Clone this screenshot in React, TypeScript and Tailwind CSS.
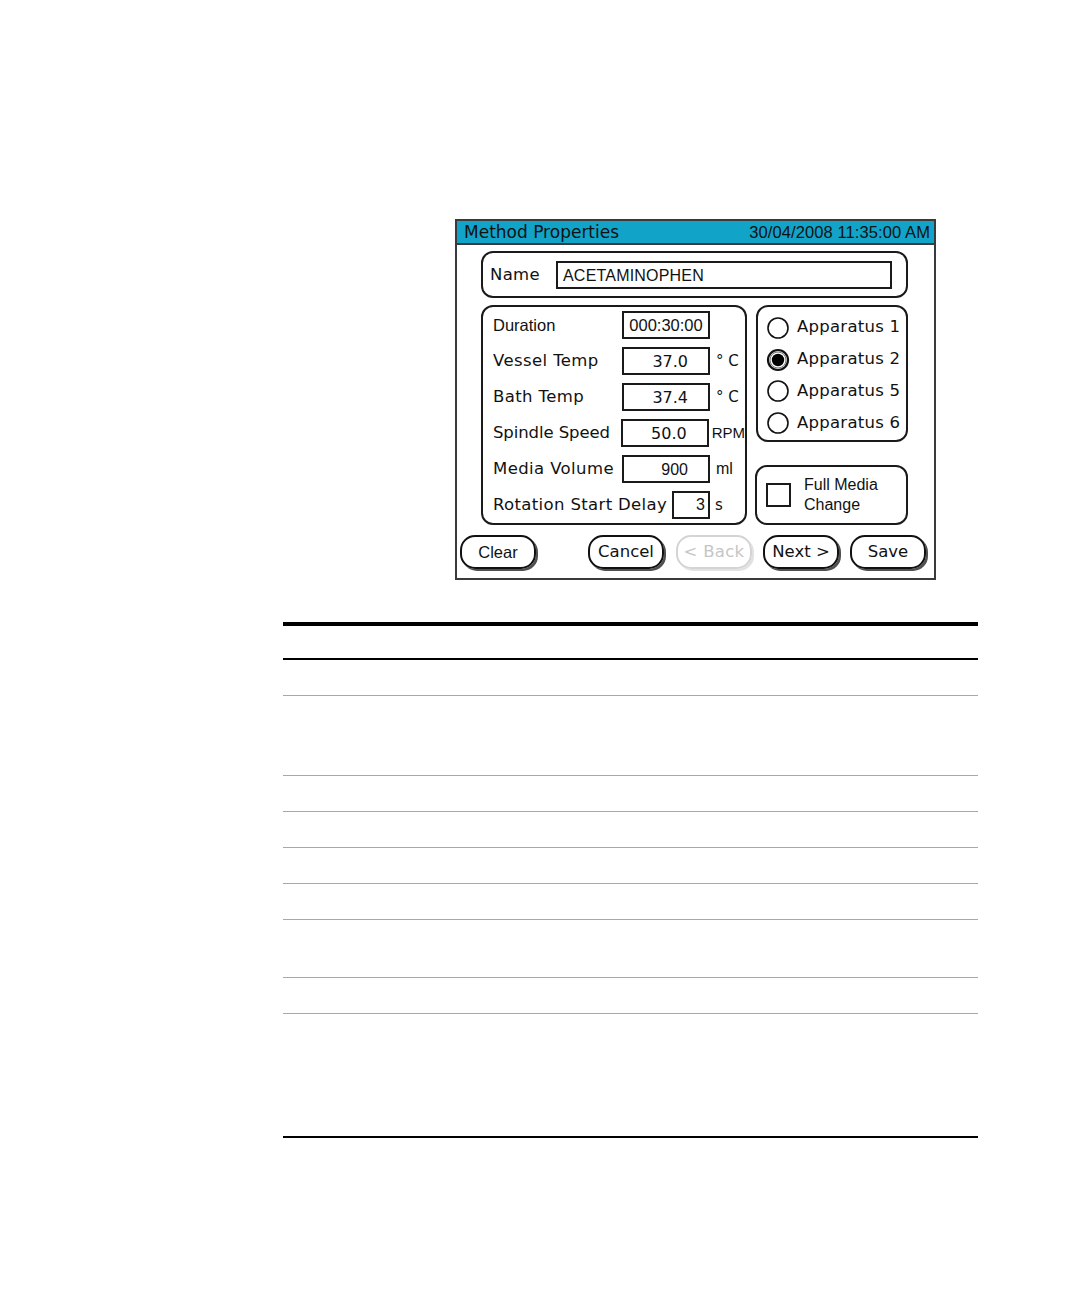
import React from "react";

const DV = "font-['DejaVu_Sans',sans-serif]";
const LS = "font-['Liberation_Sans',Arial,sans-serif]";

function Radio({ checked }: { checked?: boolean }) {
  return (
    <svg width="24" height="24" viewBox="0 0 24 24" className="shrink-0">
      <circle cx="12" cy="12" r="10" fill="white" stroke="#111" strokeWidth={checked ? 2.2 : 1.6} />
      {checked && <circle cx="12" cy="12" r="8" fill="none" stroke="#777" strokeWidth="1" />}
      {checked && <circle cx="12" cy="12" r="6.2" fill="#000" />}
    </svg>
  );
}

function Btn({ label, disabled, font }: { label: string; disabled?: boolean; font: string }) {
  return (
    <div
      className={
        disabled
          ? `w-[76px] h-[34px] rounded-[15px] border-2 border-[#d4d4d4] shadow-[2px_2px_0_0_#e2e2e2] flex items-center justify-center text-[16.5px] tracking-[0.3px] text-[#c6c6c6] ${font}`
          : `w-[76px] h-[34px] rounded-[15px] border-2 border-[#111] shadow-[2px_2px_0_0_#505050] flex items-center justify-center text-[16.5px] text-[#111] ${font}`
      }
    >
      {label}
    </div>
  );
}

function Field({
  label,
  value,
  unit,
  valueFont,
  unitClass,
  labelClass,
}: {
  label: string;
  value: string;
  unit?: string;
  valueFont: string;
  unitClass?: string;
  labelClass: string;
}) {
  return (
    <div className="h-[36px] flex items-center">
      <div className={labelClass}>{label}</div>
      <div className={`w-[88px] h-[28px] border-2 border-[#1a1a1a] flex items-center justify-end pr-[20px] pt-[1px] text-[16px] text-[#111] ${valueFont}`}>
        {value}
      </div>
      {unit && <div className={unitClass}>{unit}</div>}
    </div>
  );
}

const LBL = `w-[129px] pt-[1px] text-[16.5px] tracking-[0.4px] text-[#111] ${DV}`;
const LBL_TIGHT = `w-[129px] pt-[1px] text-[16.5px] tracking-[-0.1px] text-[#111] ${DV}`;

function Frame() {
  return (
    <div className="w-[481px] h-[361px] border-2 border-[#3a3a3a] bg-white flex flex-col">
      <div className="h-[24px] bg-[#12a3c8] border-b-2 border-[#3a3a3a] flex items-center justify-between pl-[7px] pr-[4px] pt-[1px] text-[#111]">
        <span className={`text-[17px] ${DV}`}>Method Properties</span>
        <span className={`text-[16.5px] tracking-[0.1px] ${LS}`}>30/04/2008 11:35:00 AM</span>
      </div>

      <div className="mt-[6px] ml-[24px] w-[427px] h-[47px] border-2 border-[#1a1a1a] rounded-[12px] flex items-center pl-[7px] pt-[1px]">
        <div className={`w-[66px] text-[16.5px] tracking-[0.3px] text-[#111] ${DV}`}>Name</div>
        <div className={`w-[336px] h-[28px] border-2 border-[#1a1a1a] flex items-center pl-[5px] pt-[1px] text-[16px] tracking-[0.2px] text-[#111] ${LS}`}>
          ACETAMINOPHEN
        </div>
      </div>

      <div className="mt-[7px] ml-[24px] flex gap-[9px]">
        <div className="w-[266px] h-[220px] border-2 border-[#1a1a1a] rounded-[12px] pl-[10px]">
          <div className="h-[36px] flex items-center">
            <div className={`w-[129px] text-[16.5px] text-[#111] ${LS}`}>Duration</div>
            <div className={`w-[88px] h-[28px] border-2 border-[#1a1a1a] flex items-center justify-center pt-[1px] text-[16.5px] text-[#111] ${LS}`}>
              000:30:00
            </div>
          </div>
          <Field label="Vessel Temp" labelClass={LBL} value="37.0" unit="° C" valueFont={DV} unitClass={`ml-[6px] text-[15px] text-[#111] ${DV}`} />
          <Field label="Bath Temp" labelClass={LBL} value="37.4" unit="° C" valueFont={DV} unitClass={`ml-[6px] text-[15px] text-[#111] ${DV}`} />
          <Field label="Spindle Speed" labelClass={LBL_TIGHT} value="50.0" unit="RPM" valueFont={DV} unitClass={`ml-[3px] text-[15px] text-[#111] ${LS}`} />
          <Field label="Media Volume" labelClass={LBL} value="900" unit="ml" valueFont={LS} unitClass={`ml-[6px] text-[16px] text-[#111] ${LS}`} />
          <div className="h-[36px] flex items-center">
            <div className={`w-[179px] pt-[1px] text-[16.5px] tracking-[0.35px] text-[#111] ${DV}`}>Rotation Start Delay</div>
            <div className={`w-[38px] h-[28px] border-2 border-[#1a1a1a] flex items-center justify-end pr-[3px] text-[16px] text-[#111] ${LS}`}>
              3
            </div>
            <div className={`ml-[5px] text-[15px] text-[#111] ${DV}`}>s</div>
          </div>
        </div>

        <div className="w-[152px] flex flex-col">
          <div className="h-[137px] border-2 border-[#1a1a1a] rounded-[12px] pt-[5px] pl-[8px]">
            {["Apparatus 1", "Apparatus 2", "Apparatus 5", "Apparatus 6"].map((a, i) => (
              <div key={a} className="h-[31.7px] flex items-center gap-[7px]">
                <Radio checked={i === 1} />
                <span className={`text-[16.5px] tracking-[0.25px] text-[#111] ${DV}`}>{a}</span>
              </div>
            ))}
          </div>
          <div className="mt-[23px] -ml-[1px] h-[60px] border-2 border-[#1a1a1a] rounded-[12px] flex items-center pl-[9px] gap-[13px]">
            <div className="w-[25px] h-[24px] border-2 border-[#1a1a1a] shrink-0" />
            <div className={`text-[16px] leading-[20px] text-[#111] ${LS}`}>
              Full Media
              <br />
              Change
            </div>
          </div>
        </div>
      </div>

      <div className="mt-[10px] pl-[3px] flex">
        <Btn label="Clear" font={LS} />
        <div className="ml-[52px]">
          <Btn label="Cancel" font={DV} />
        </div>
        <div className="ml-[12px]">
          <Btn label="< Back" disabled font={DV} />
        </div>
        <div className="ml-[11px]">
          <Btn label="Next >" font={DV} />
        </div>
        <div className="ml-[11px]">
          <Btn label="Save" font={DV} />
        </div>
      </div>
    </div>
  );
}

export default function App() {
  const rows = [35, 79, 35, 35, 35, 35, 57, 35];
  return (
    <div className="w-[1080px] min-h-[1296px] bg-white">
      <div className="pt-[219px] pl-[455px]">
        <Frame />
      </div>
      <div className="mt-[42px] ml-[283px] w-[695px] border-t-4 border-black">
        <div className="h-[34px] border-b-2 border-black" />
        {rows.map((h, i) => (
          <div key={i} className="border-b border-[#a8a8a8]" style={{ height: h + 1 }} />
        ))}
        <div className="h-[124px] border-b-2 border-black" />
      </div>
    </div>
  );
}
